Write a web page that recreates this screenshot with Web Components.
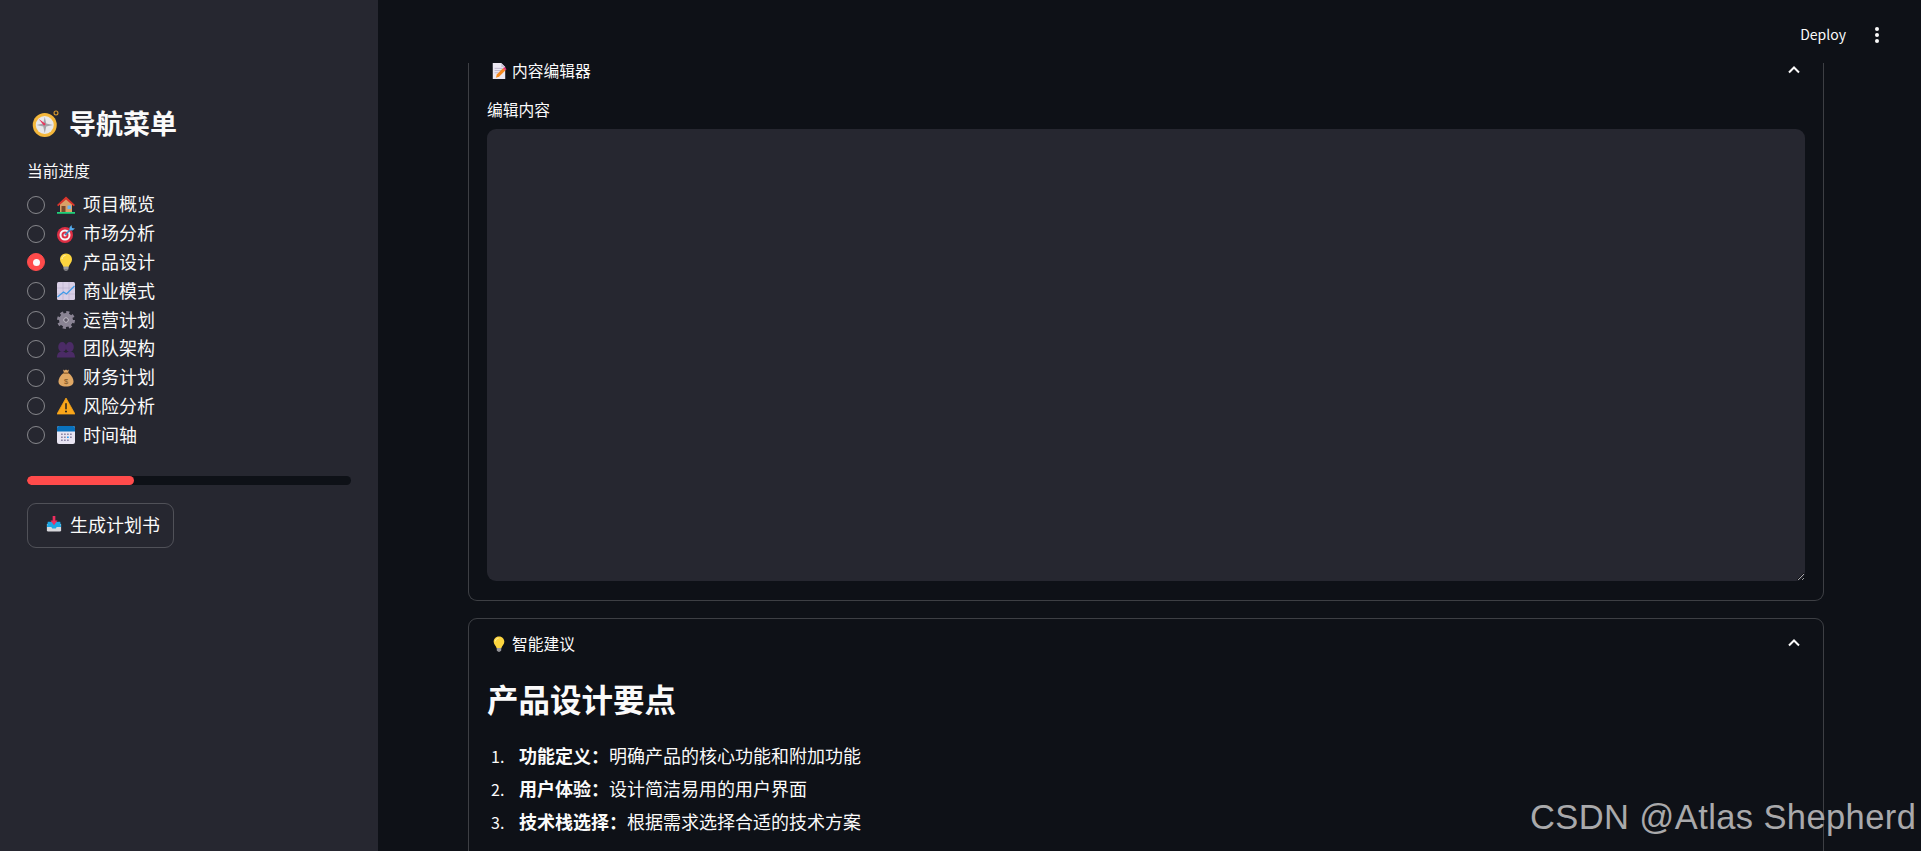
<!DOCTYPE html>
<html lang="zh">
<head>
<meta charset="UTF-8">
<title>导航菜单</title>
<style>
  html, body { margin: 0; height: 100%; background: #0e1117; overflow: hidden; }
  body { font-family: "Noto Sans CJK SC", "Noto Sans", sans-serif; color: #fafafa; }
</style>
</head>
<body>
<app-shell>
  <nav-sidebar slot="side" title-text="导航菜单" title-icon="compass" progress="33">
    <radio-item icon="house">项目概览</radio-item>
    <radio-item icon="target">市场分析</radio-item>
    <radio-item icon="bulb" checked>产品设计</radio-item>
    <radio-item icon="chart">商业模式</radio-item>
    <radio-item icon="gear">运营计划</radio-item>
    <radio-item icon="people">团队架构</radio-item>
    <radio-item icon="money">财务计划</radio-item>
    <radio-item icon="warn">风险分析</radio-item>
    <radio-item icon="calendar">时间轴</radio-item>
  </nav-sidebar>
  <top-bar slot="top"></top-bar>
  <st-expander icon="memo" label="内容编辑器" clipped>
    <text-editor label="编辑内容"></text-editor>
  </st-expander>
  <st-expander icon="bulb" label="智能建议" open-end>
    <advice-list heading="产品设计要点">
      <advice-item n="1."><b>功能定义：</b>明确产品的核心功能和附加功能</advice-item>
      <advice-item n="2."><b>用户体验：</b>设计简洁易用的用户界面</advice-item>
      <advice-item n="3."><b>技术栈选择：</b>根据需求选择合适的技术方案</advice-item>
    </advice-list>
  </st-expander>
</app-shell>

<script>
const ICONS = {
  compass: `<circle cx="17" cy="20" r="16" fill="#f4b73b"/><circle cx="32" cy="4" r="2.600" fill="none" stroke="#d9992b" stroke-width="1.500"/><circle cx="17" cy="20" r="12" fill="#e8e8ea"/><path d="M17 9l2 9 9 2-9 2-2 9-2-9-9-2 9-2z" fill="#a4a4a9"/><path d="M9 12l9.500 6.500-2.500 2.500z" fill="#e8345c"/>`,
  house: `<path d="M18 3L2 18h4v14h24V18h4z" fill="#d9a066"/><path d="M18 1L0 18l2.500 2.500L18 7l15.500 13.500L36 18z" fill="#d8342c"/><rect x="9" y="20" width="8" height="12" fill="#7a4a2b"/><rect x="21" y="19" width="7" height="7" fill="#6cb4ee"/><rect x="0" y="32" width="36" height="3.500" fill="#1fd27a"/>`,
  target: `<circle cx="16" cy="20" r="16" fill="#dd2e44"/><circle cx="16" cy="20" r="11" fill="#f5f5f5"/><circle cx="16" cy="20" r="7" fill="#dd2e44"/><circle cx="16" cy="20" r="3" fill="#f5f5f5"/><path d="M16 20L30 6" stroke="#3b88c3" stroke-width="3.500"/><path d="M25 5l4-5 1 6 6 1-5 4-6-1z" fill="#55acee"/>`,
  bulb: `<path d="M18 1C10 1 6 7 6 13c0 6 5 9 7 15h10c2-6 7-9 7-15 0-6-4-12-12-12z" fill="#fcd53f"/><path d="M17 5c-4 0-7 3-7 7" stroke="#fff3b0" stroke-width="2" fill="none"/><rect x="13" y="27" width="10" height="6.500" rx="1.500" fill="#9a9a9e"/><rect x="15" y="33" width="6" height="3" rx="1" fill="#77777b"/>`,
  chart: `<rect x="0" y="0" width="36" height="36" rx="3" fill="#d9cfe6"/><path d="M0 12h36M0 24h36M12 0v36M24 0v36" stroke="#b3a6c6" stroke-width="1"/><path d="M1 30l12-10 6 4 16-16" fill="none" stroke="#3f9be8" stroke-width="2.500"/>`,
  gear: `<circle cx="18" cy="18" r="14.500" fill="none" stroke="#8a8494" stroke-width="7" stroke-dasharray="5.900 5.490"/><circle cx="18" cy="18" r="10" fill="none" stroke="#8a8494" stroke-width="8"/><circle cx="18" cy="18" r="6" fill="#b7b2be"/><circle cx="18" cy="18" r="3.500" fill="#5d5866"/>`,
  people: `<g fill="#4b2b66"><ellipse cx="10.500" cy="14" rx="8" ry="10"/><ellipse cx="25.500" cy="14" rx="8" ry="10"/><path d="M0 35c0-9 5-12 10-12s8 3 8 3 3-3 8-3 10 3 10 12z"/></g>`,
  money: `<path d="M13 8C6 13 3 20 3 25c0 7 5 10 15 10s15-3 15-10c0-5-3-12-10-17z" fill="#e0a865"/><path d="M12 1l3 2 3-2 3 2 3-2-2 7H14z" fill="#e0a865"/><rect x="12.500" y="7" width="11" height="2.500" rx="1" fill="#8d5f2c"/><text x="18" y="29" text-anchor="middle" font-size="15" font-family="Liberation Sans" fill="#7a4f20">$</text>`,
  warn: `<path d="M18 2L0 34h36z" fill="#faa61a" stroke="#faa61a" stroke-linejoin="round" stroke-width="1.500"/><rect x="16.500" y="12" width="3" height="13" rx="1.500" fill="#231f20"/><circle cx="18" cy="29" r="2" fill="#231f20"/>`,
  calendar: `<rect x="0" y="0" width="36" height="36" rx="4" fill="#e9e5f2"/><path d="M0 11V4a4 4 0 014-4h28a4 4 0 014 4v7z" fill="#0a72bd"/><g fill="#8f88a6"><rect x="8" y="15" width="3.500" height="3"/><rect x="14" y="15" width="3.500" height="3"/><rect x="20" y="15" width="3.500" height="3"/><rect x="26" y="15" width="3.500" height="3"/><rect x="8" y="21" width="3.500" height="3"/><rect x="14" y="21" width="3.500" height="3"/><rect x="26" y="21" width="3.500" height="3"/><rect x="8" y="27" width="3.500" height="3"/><rect x="14" y="27" width="3.500" height="3"/><rect x="20" y="27" width="3.500" height="3"/></g><rect x="20" y="21" width="3.500" height="3" fill="#2a9df4"/>`,
  inbox: `<path d="M2 18h32v14a3 3 0 01-3 3H5a3 3 0 01-3-3z" fill="#d8d8dc"/><path d="M4 13h28l2 12H24l-2 3h-8l-2-3H2z" fill="#1ba7e6"/><path d="M15 0h6v10h5L18 21 10 10h5z" fill="#ee2e5f"/>`,
  memo: `<path d="M4 0h19l9 9v27H4z" fill="#ece8f2"/><path d="M23 0l9 9h-9z" fill="#c9c2d6"/><path d="M8 12h18M8 17h18M8 22h9" stroke="#b9b0c9" stroke-width="2"/><path d="M11 33l2-7L27 12l5 5-14 14z" fill="#f58a1f"/><path d="M27 12l3-3 5 5-3 3z" fill="#ee2e73"/>`,
};

class EmojiIcon extends HTMLElement {
  connectedCallback() {
    const s = this.getAttribute("size") || 18;
    this.attachShadow({ mode: "open" }).innerHTML = `
      <style>:host { display: inline-flex; flex: none; width: ${s}px; height: ${s}px; } svg { width: 100%; height: 100%; display: block; }</style>
      <svg viewBox="0 0 36 36">${ICONS[this.getAttribute("name")] || ""}</svg>`;
  }
}
customElements.define("emoji-icon", EmojiIcon);

class AppShell extends HTMLElement {
  constructor() {
    super();
    this.attachShadow({ mode: "open" }).innerHTML = `
      <style>
        :host { display: flex; width: 100%; height: 100vh; overflow: hidden; position: relative; }
        #main { flex: 1; min-width: 0; display: flex; flex-direction: column; overflow: hidden; }
        #scroll { flex: 1; min-height: 0; overflow: hidden; padding: 0 97px 0 90px; display: flex; flex-direction: column; gap: 17px; }
        #mark { position: absolute; left: 1530px; top: 797px; font: 34.500px/40px "Liberation Sans", Arial, sans-serif; color: #a9a9ab; white-space: nowrap; letter-spacing: .4px; }
      </style>
      <slot name="side"></slot>
      <div id="main">
        <slot name="top"></slot>
        <div id="scroll"><slot></slot></div>
      </div>
      <div id="mark">CSDN @Atlas Shepherd</div>`;
  }
}
customElements.define("app-shell", AppShell);

class NavSidebar extends HTMLElement {
  connectedCallback() {
    this.attachShadow({ mode: "open" }).innerHTML = `
      <style>
        :host { display: flex; flex-direction: column; flex: none; width: 378px; box-sizing: border-box; height: 100%; background: #262730; padding: 105px 27px 0; }
        h4 { margin: 0; height: 36px; display: flex; align-items: center; gap: 10px; font-size: 27px; font-weight: 700; line-height: 36px; padding-left: 5px; }
        .cap { margin-top: 18px; font-size: 15.750px; line-height: 24px; height: 24px; }
        .list { margin-top: 7.500px; display: flex; flex-direction: column; }
        .bar { margin-top: 26.300px; height: 9px; border-radius: 5px; background: #0e1117; overflow: hidden; }
        .bar div { height: 100%; background: #ff4b4b; border-radius: 5px; }
        button { margin-top: 18px; align-self: flex-start; height: 45px; width: 147px; box-sizing: border-box; display: flex; align-items: center; gap: 8px; padding: 0 0 2px 18px; font: inherit; font-size: 18px; color: #fafafa; background: transparent; border: 1px solid rgba(250,250,250,.2); border-radius: 9px; }
      </style>
      <h4><emoji-icon name="${this.getAttribute("title-icon")}" size="27"></emoji-icon>${this.getAttribute("title-text")}</h4>
      <div class="cap">当前进度</div>
      <div class="list"><slot></slot></div>
      <div class="bar"><div style="width:${this.getAttribute("progress")}%"></div></div>
      <button><emoji-icon name="inbox" size="16"></emoji-icon>生成计划书</button>`;
  }
}
customElements.define("nav-sidebar", NavSidebar);

class RadioItem extends HTMLElement {
  connectedCallback() {
    const on = this.hasAttribute("checked");
    this.attachShadow({ mode: "open" }).innerHTML = `
      <style>
        :host { display: flex; align-items: center; height: 28.800px; font-size: 18px; color: #fafafa; }
        .dot { width: 18px; height: 18px; box-sizing: border-box; border-radius: 50%; border: 1px solid rgba(250,250,250,.45); display: flex; align-items: center; justify-content: center; margin-right: 12px; }
        .dot.on { background: #ff4b4b; border-color: #ff4b4b; }
        .dot.on::after { content: ""; width: 7px; height: 7px; border-radius: 50%; background: #fafafa; }
        emoji-icon { margin-right: 8px; }
        .txt { padding-bottom: 3px; }
      </style>
      <span class="dot ${on ? "on" : ""}"></span>
      <emoji-icon name="${this.getAttribute("icon")}" size="18"></emoji-icon>
      <span class="txt"><slot></slot></span>`;
  }
}
customElements.define("radio-item", RadioItem);

class TopBar extends HTMLElement {
  constructor() {
    super();
    this.attachShadow({ mode: "open" }).innerHTML = `
      <style>
        :host { display: flex; flex: none; height: 63px; justify-content: flex-end; padding: 17px 36px 0 0; box-sizing: border-box; background: #0e1117; }
        .deploy { font-size: 14px; line-height: 36px; height: 36px; margin-right: 23px; margin-top: -1px; }
        svg { width: 16px; height: 36px; display: block; }
      </style>
      <span class="deploy">Deploy</span>
      <svg viewBox="0 0 16 36"><circle cx="8" cy="12" r="2" fill="#fafafa"/><circle cx="8" cy="18" r="2" fill="#fafafa"/><circle cx="8" cy="24" r="2" fill="#fafafa"/></svg>`;
  }
}
customElements.define("top-bar", TopBar);

class StExpander extends HTMLElement {
  connectedCallback() {
    const clipped = this.hasAttribute("clipped");
    const openEnd = this.hasAttribute("open-end");
    this.attachShadow({ mode: "open" }).innerHTML = `
      <style>
        :host { display: block; flex: none; box-sizing: border-box; border: 1px solid rgba(250,250,250,.2); border-radius: 9px; ${clipped ? "border-top: none; border-top-left-radius: 0; border-top-right-radius: 0;" : ""} ${openEnd ? "min-height: 320px;" : ""} }
        .head { height: 16px; padding: ${clipped ? 0 : 17}px 21px 0 22px; display: flex; align-items: center; font-size: 15.750px; line-height: 16px; }
        .ttl { display: flex; align-items: center; gap: 5px; flex: 1; }
        .chev { width: 16px; height: 16px; display: block; margin-top: -3px; }
        .body { padding: 0 18px; }
      </style>
      <div class="head">
        <span class="ttl"><emoji-icon name="${this.getAttribute("icon")}" size="16"></emoji-icon>${this.getAttribute("label")}</span>
        <svg class="chev" viewBox="0 0 16 16"><path d="M3 10.500l5-5 5 5" fill="none" stroke="#fafafa" stroke-width="2"/></svg>
      </div>
      <div class="body"><slot></slot></div>`;
  }
}
customElements.define("st-expander", StExpander);

class TextEditor extends HTMLElement {
  connectedCallback() {
    this.attachShadow({ mode: "open" }).innerHTML = `
      <style>
        :host { display: block; padding-bottom: 19px; }
        label { display: block; margin-top: 19px; font-size: 15.750px; line-height: 24px; height: 24px; margin-bottom: 7px; }
        textarea { display: block; width: 100%; height: 452px; box-sizing: border-box; background: #262730; border: none; border-radius: 9px; margin: 0; padding: 14px 18px; color: #fafafa; font: inherit; outline: none; }
      </style>
      <label>${this.getAttribute("label")}</label>
      <textarea></textarea>`;
  }
}
customElements.define("text-editor", TextEditor);

class AdviceList extends HTMLElement {
  connectedCallback() {
    this.attachShadow({ mode: "open" }).innerHTML = `
      <style>
        :host { display: block; }
        h3 { margin: 26px 0 0; font-size: 31.500px; font-weight: 700; line-height: 40px; }
        .items { margin-top: 21px; }
      </style>
      <h3>${this.getAttribute("heading")}</h3>
      <div class="items"><slot></slot></div>`;
  }
}
customElements.define("advice-list", AdviceList);

class AdviceItem extends HTMLElement {
  connectedCallback() {
    this.attachShadow({ mode: "open" }).innerHTML = `
      <style>
        :host { display: flex; align-items: baseline; height: 32.800px; font-size: 18px; line-height: 32.800px; }
        .n { flex: none; width: 28px; margin-left: 4px; font-size: 16px; }
      </style>
      <span class="n">${this.getAttribute("n")}</span>
      <span><slot></slot></span>`;
  }
}
customElements.define("advice-item", AdviceItem);
</script>
</body>
</html>
